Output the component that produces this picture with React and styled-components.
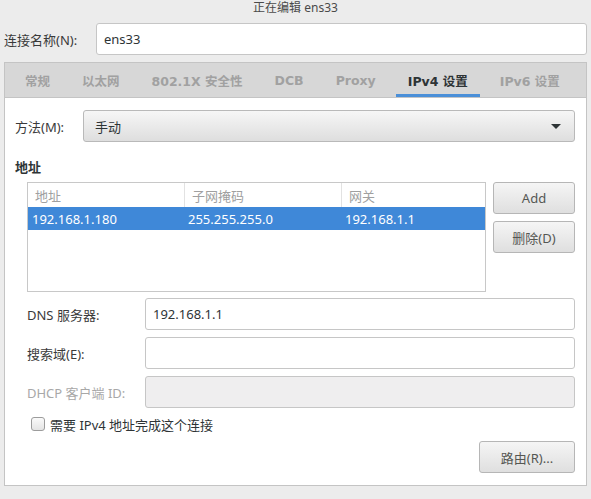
import React from "react";
import styled, { createGlobalStyle } from "styled-components";

const GlobalStyle = createGlobalStyle`
  html, body {
    margin: 0;
    padding: 0;
    background: #ececec;
  }
  body {
    font-family: "Noto Sans", "Noto Sans CJK SC", sans-serif;
    font-size: 13px;
    color: #2e3436;
  }
`;

const tabs = ["常规", "以太网", "802.1X 安全性", "DCB", "Proxy", "IPv4 设置", "IPv6 设置"];

const addresses = [{ address: "192.168.1.180", netmask: "255.255.255.0", gateway: "192.168.1.1" }];

const Page = styled.div`
  width: 591px;
  height: 499px;
  overflow: hidden;
  padding: 0 4px;
  box-sizing: border-box;
`;

const Title = styled.div`
  height: 16px;
  line-height: 16px;
  font-size: 12px;
  text-align: center;
  color: #4a4a4a;
`;

const NameRow = styled.div`
  display: flex;
  align-items: center;
  margin-top: 7px;
  height: 32px;
`;

const Label = styled.label`
  flex: 0 0 ${(p) => p.width || 92}px;
  color: ${(p) => (p.disabled ? "#a8a8a8" : "#3a3a3a")};
  white-space: nowrap;
`;

const TextInput = styled.div`
  flex: 1;
  height: 32px;
  box-sizing: border-box;
  border: 1px solid #c6c6c6;
  border-radius: 3px;
  background: ${(p) => (p.disabled ? "#efeeef" : "#ffffff")};
  padding: 0 7px;
  display: flex;
  align-items: center;
  color: #2e3436;
`;

const Notebook = styled.div`
  margin-top: 7px;
`;

const TabBar = styled.div`
  height: 36px;
  box-sizing: border-box;
  border: 1px solid #c4c4c4;
  background: #d7d7d7;
  display: flex;
  align-items: stretch;
  padding-left: 4px;
  overflow: hidden;
`;

const Tab = styled.div`
  position: relative;
  flex: 0 0 auto;
  padding: 0 16px;
  display: flex;
  align-items: center;
  white-space: nowrap;
  font-family: "DejaVu Sans", "Noto Sans CJK SC", sans-serif;
  font-weight: bold;
  font-size: 12.5px;
  color: ${(p) => (p.active ? "#2e3436" : "#a1a1a1")};
  &::after {
    content: "";
    display: ${(p) => (p.active ? "block" : "none")};
    position: absolute;
    left: 4px;
    right: 4px;
    bottom: 0;
    height: 3px;
    background: #4a8fd8;
  }
`;

const Panel = styled.div`
  background: #ffffff;
  border: 1px solid #c4c4c4;
  border-top: none;
  padding: 12px 11px 12px 10px;
  height: 388px;
  box-sizing: border-box;
`;

const MethodRow = styled.div`
  display: flex;
  align-items: center;
`;

const Combo = styled.div`
  flex: 1;
  height: 32px;
  box-sizing: border-box;
  border: 1px solid #b9b9b9;
  border-radius: 3px;
  background: linear-gradient(#f6f6f6, #dedede);
  display: flex;
  align-items: center;
  justify-content: space-between;
  padding: 0 13px 0 11px;
  color: #2e3436;
`;

const Arrow = styled.span`
  width: 0;
  height: 0;
  border-left: 5px solid transparent;
  border-right: 5px solid transparent;
  border-top: 5px solid #2e3436;
`;

const SectionTitle = styled.div`
  margin-top: 16px;
  line-height: 18px;
  font-weight: bold;
  color: #2e3436;
`;

const AddressArea = styled.div`
  margin-top: 6px;
  margin-left: 12px;
  display: flex;
  gap: 7px;
`;

const Table = styled.div`
  width: 459px;
  height: 110px;
  box-sizing: border-box;
  border: 1px solid #c8c8c8;
`;

const TableRow = styled.div`
  display: grid;
  grid-template-columns: 156px 157px 1fr;
  height: ${(p) => (p.header ? 24 : 23)}px;
  background: ${(p) => (p.selected ? "#3f88d8" : "transparent")};
  color: ${(p) => (p.header ? "#a0a0a0" : p.selected ? "#ffffff" : "#2e3436")};
`;

const Cell = styled.div`
  display: flex;
  align-items: center;
  padding-left: ${(p) => (p.header ? 7 : 4)}px;
  border-left: ${(p) => (p.header && !p.first ? "1px solid #e2e2e2" : "none")};
  white-space: nowrap;
`;

const ButtonColumn = styled.div`
  display: flex;
  flex-direction: column;
  gap: 7px;
`;

const Button = styled.button`
  width: ${(p) => p.width || 82}px;
  height: 32px;
  box-sizing: border-box;
  border: 1px solid #b6b6b6;
  border-radius: 3px;
  background: linear-gradient(#f5f5f5, #dfdfdf);
  font-family: inherit;
  font-size: 13px;
  color: #555753;
  padding: 0;
`;

const FormGrid = styled.div`
  margin-top: 6px;
  margin-left: 12px;
  display: flex;
  flex-direction: column;
  gap: 7px;
`;

const FormRow = styled.div`
  display: flex;
  align-items: center;
`;

const CheckRow = styled.div`
  margin-top: 8px;
  margin-left: 16px;
  height: 16px;
  display: flex;
  align-items: center;
  gap: 5px;
`;

const CheckBox = styled.span`
  width: 14px;
  height: 14px;
  box-sizing: border-box;
  border: 1px solid #9c9c9c;
  border-radius: 3px;
  background: linear-gradient(#fafafa, #e4e4e4);
`;

const Footer = styled.div`
  margin-top: 9px;
  display: flex;
  justify-content: flex-end;
`;

export default function App() {
  return (
    <Page>
      <GlobalStyle />
      <Title>正在编辑 ens33</Title>
      <NameRow>
        <Label>连接名称(N):</Label>
        <TextInput>ens33</TextInput>
      </NameRow>
      <Notebook>
        <TabBar>
          {tabs.map((t) => (
            <Tab key={t} active={t === "IPv4 设置"}>
              {t}
            </Tab>
          ))}
        </TabBar>
        <Panel>
          <MethodRow>
            <Label width={68}>方法(M):</Label>
            <Combo>
              手动
              <Arrow />
            </Combo>
          </MethodRow>
          <SectionTitle>地址</SectionTitle>
          <AddressArea>
            <Table>
              <TableRow header>
                <Cell header first>地址</Cell>
                <Cell header>子网掩码</Cell>
                <Cell header>网关</Cell>
              </TableRow>
              {addresses.map((a) => (
                <TableRow key={a.address} selected>
                  <Cell>{a.address}</Cell>
                  <Cell>{a.netmask}</Cell>
                  <Cell>{a.gateway}</Cell>
                </TableRow>
              ))}
            </Table>
            <ButtonColumn>
              <Button>Add</Button>
              <Button>删除(D)</Button>
            </ButtonColumn>
          </AddressArea>
          <FormGrid>
            <FormRow>
              <Label width={118}>DNS 服务器:</Label>
              <TextInput>192.168.1.1</TextInput>
            </FormRow>
            <FormRow>
              <Label width={118}>搜索域(E):</Label>
              <TextInput />
            </FormRow>
            <FormRow>
              <Label width={118} disabled>DHCP 客户端 ID:</Label>
              <TextInput disabled />
            </FormRow>
          </FormGrid>
          <CheckRow>
            <CheckBox />
            需要 IPv4 地址完成这个连接
          </CheckRow>
          <Footer>
            <Button width={96}>路由(R)...</Button>
          </Footer>
        </Panel>
      </Notebook>
    </Page>
  );
}
